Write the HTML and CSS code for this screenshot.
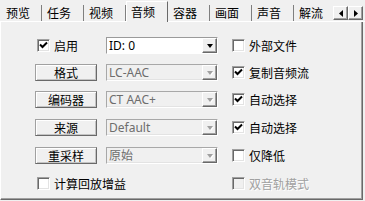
FILE: index.html
```html
<!DOCTYPE html>
<html lang="zh">

<head>
  <meta charset="UTF-8">
  <title>音频</title>
  <link rel="stylesheet" href="styles.css">
</head>

<body>
  <div class="window">
    <!-- Tab strip -->
    <div class="tabbar">
      <div class="tablist">
        <div class="tab"><span>预览</span></div>
        <div class="tab"><span>任务</span></div>
        <div class="tab"><span>视频</span></div>
        <div class="tab active"><span>音频</span></div>
        <div class="tab"><span>容器</span></div>
        <div class="tab"><span>画面</span></div>
        <div class="tab"><span>声音</span></div>
        <div class="tab"><span>解流</span></div>
      </div>
      <div class="scroller">
        <div class="arrow-btn">
          <svg width="4" height="7" viewBox="0 0 4 7"><path d="M4 0V7L0 3.5Z" fill="#000" /></svg>
        </div>
        <div class="arrow-btn">
          <svg width="4" height="7" viewBox="0 0 4 7"><path d="M0 0V7L4 3.5Z" fill="#000" /></svg>
        </div>
      </div>
    </div>

    <!-- Audio page -->
    <div class="panel">
      <div class="form">
        <label class="check first">
          <span class="cb"><svg width="9" height="9" viewBox="0 0 9 9"><path d="M1 3.5L3.5 6L8 1.5" /></svg></span>
          启用
        </label>
        <div class="select">
          <span class="value">ID: 0</span>
          <span class="drop"><i class="tri"></i></span>
        </div>
        <label class="check">
          <span class="cb"></span>
          外部文件
        </label>

        <button class="btn">格式</button>
        <div class="select disabled">
          <span class="value">LC-AAC</span>
          <span class="drop"><i class="tri"></i></span>
        </div>
        <label class="check">
          <span class="cb"><svg width="9" height="9" viewBox="0 0 9 9"><path d="M1 3.5L3.5 6L8 1.5" /></svg></span>
          复制音频流
        </label>

        <button class="btn">编码器</button>
        <div class="select disabled">
          <span class="value">CT AAC+</span>
          <span class="drop"><i class="tri"></i></span>
        </div>
        <label class="check">
          <span class="cb"><svg width="9" height="9" viewBox="0 0 9 9"><path d="M1 3.5L3.5 6L8 1.5" /></svg></span>
          自动选择
        </label>

        <button class="btn">来源</button>
        <div class="select disabled">
          <span class="value">Default</span>
          <span class="drop"><i class="tri"></i></span>
        </div>
        <label class="check">
          <span class="cb"><svg width="9" height="9" viewBox="0 0 9 9"><path d="M1 3.5L3.5 6L8 1.5" /></svg></span>
          自动选择
        </label>

        <button class="btn">重采样</button>
        <div class="select disabled">
          <span class="value">原始</span>
          <span class="drop"><i class="tri"></i></span>
        </div>
        <label class="check">
          <span class="cb"></span>
          仅降低
        </label>

        <label class="check first wide">
          <span class="cb"></span>
          计算回放增益
        </label>
        <label class="check off">
          <span class="cb"></span>
          双音轨模式
        </label>
      </div>
    </div>
  </div>
</body>

</html>
```

FILE: styles.css
```css
body {
  margin: 0;
  background: #f0f0f0;
  color: #000;
  font-family: "Noto Sans CJK SC", sans-serif;
  font-size: 12px;
}

.window {
  width: 365px;
  height: 201px;
  overflow: hidden;
}

/* Tabs */
.tabbar {
  display: flex;
  height: 22px;
}

.tablist {
  display: flex;
  width: 333px;
  overflow: hidden;
}

.tab {
  flex: none;
  width: 42px;
  height: 22px;
  box-sizing: border-box;
  padding-top: 5px;
  border-bottom: 1px solid #fff;
}

.tab span {
  display: block;
  height: 16px;
  line-height: 16px;
  padding-left: 5px;
  border-right: 1px solid #7f7f7f;
}

.tab:first-child span {
  padding-left: 6px;
}

.tab.active {
  margin-top: 1px;
  height: 21px;
  padding-top: 2px;
  border: 1px solid #fff;
  border-right: 1px solid #696969;
  border-bottom: none;
}

.tab.active span {
  padding-left: 4px;
  border-right: none;
}

.scroller {
  display: flex;
  flex: 1;
  box-sizing: border-box;
  padding-top: 6px;
  border-bottom: 1px solid #fff;
}

.arrow-btn {
  display: flex;
  align-items: center;
  justify-content: center;
  width: 15px;
  height: 14px;
  box-sizing: border-box;
  border: 1px solid;
  border-color: #fff #696969 #696969 #fff;
  box-shadow: inset -1px -1px #a0a0a0;
}

/* Panel */
.panel {
  width: 363px;
  height: 178px;
  box-sizing: border-box;
  border-left: 1px solid #fff;
  border-right: 1px solid #696969;
  border-bottom: 1px solid #696969;
  box-shadow: inset -1px -1px #a0a0a0;
}

.form {
  display: grid;
  grid-template-columns: 71px 126px 1fr;
  grid-template-rows: 27px 27px 28px 28px 28px 17px;
  align-items: start;
  padding: 15px 0 0 34px;
}

.btn {
  width: 62px;
  height: 17px;
  box-sizing: border-box;
  margin: 0;
  padding: 0;
  border: 1px solid;
  border-color: #a0a0a0 #696969 #696969 #a0a0a0;
  box-shadow: inset 1px 1px #fff, inset -1px -1px #c4c4c4;
  background: #f0f0f0;
  font-family: inherit;
  font-size: 12px;
  line-height: 14px;
  color: #000;
}

/* Combo boxes */
.select {
  display: flex;
  width: 112px;
  height: 17px;
  box-sizing: border-box;
  border: 1px solid;
  border-color: #9a9a9a #fff #fff #9a9a9a;
  background: #fff;
}

.select .value {
  flex: 1;
  padding-left: 2px;
  line-height: 15px;
  font-family: "Noto Sans", "Noto Sans CJK SC", sans-serif;
  font-size: 12px;
}

.select.disabled {
  background: #f0f0f0;
  border-color: #a8a8a8 #fff #fff #a8a8a8;
  box-shadow: inset -1px -1px #e3e3e3;
}

.select.disabled .value {
  color: #6d6d6d;
}

.drop {
  display: flex;
  align-items: center;
  justify-content: center;
  width: 15px;
  box-sizing: border-box;
  border: 1px solid;
  border-color: #fff #696969 #696969 #fff;
  box-shadow: inset -1px -1px #a0a0a0;
  background: #f0f0f0;
}

.tri {
  width: 0;
  height: 0;
  border-left: 3.5px solid transparent;
  border-right: 3.5px solid transparent;
  border-top: 4px solid #000;
}

.select.disabled .tri {
  border-top-color: #a0a0a0;
  filter: drop-shadow(1px 1px 0 #fff);
}

/* Check boxes */
.check {
  display: flex;
  align-items: center;
  gap: 4px;
  height: 17px;
  line-height: 16px;
  white-space: nowrap;
}

.check.first {
  padding-left: 2px;
}

.check.wide {
  grid-column: 1 / 3;
}

.cb {
  display: flex;
  align-items: center;
  justify-content: center;
  width: 13px;
  height: 13px;
  box-sizing: border-box;
  border: 1px solid;
  border-color: #a0a0a0 #fff #fff #a0a0a0;
  box-shadow: inset 1px 1px #696969, inset -1px -1px #e3e3e3;
  background: #fff;
}

.cb svg path {
  fill: none;
  stroke: #000;
  stroke-width: 2;
}

.check.off {
  color: #a0a0a0;
  text-shadow: 1px 1px 0 #fff;
}

.check.off .cb {
  background: #f0f0f0;
}
```
